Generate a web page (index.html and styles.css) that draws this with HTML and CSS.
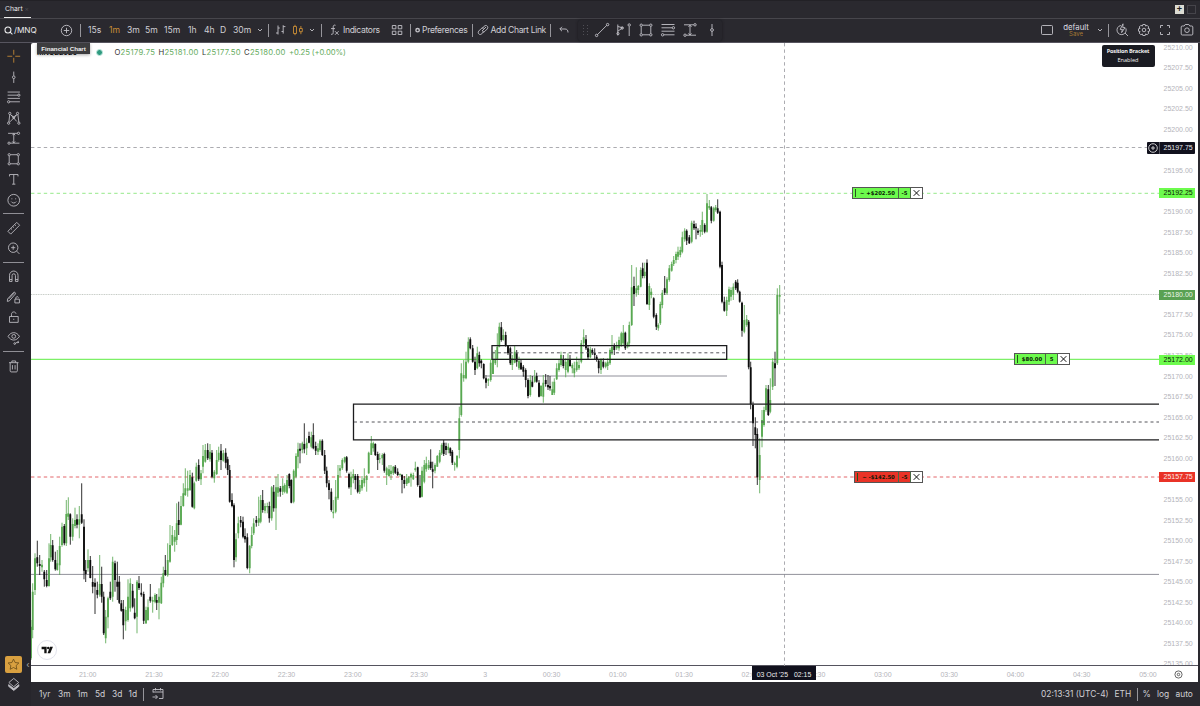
FILE: index.html
```
<!DOCTYPE html>
<html lang="en">
<head>
  <meta charset="UTF-8" />
  <meta name="viewport" content="width=device-width, initial-scale=1.0"/>
  <title>/MNQ Chart</title>
  <link rel="stylesheet" href="styles.css">
</head>
<body>

  <!-- Shared icons -->
  <svg class="defs">
    <symbol id="i-rect" viewBox="0 0 16 16"><path d="M3.2 4.5v7M12.8 4.5v7M4.5 3.2h7M4.5 12.8h7"/><circle cx="3.2" cy="3.2" r="1.2"/><circle cx="12.8" cy="3.2" r="1.2"/><circle cx="3.2" cy="12.8" r="1.2"/><circle cx="12.8" cy="12.8" r="1.2"/></symbol>
    <symbol id="i-fib" viewBox="0 0 16 16"><path d="M1.5 2.5h13M1.5 5.8h10.8M1.5 9.2h13M3.8 12.8h10.7"/><circle cx="13.4" cy="5.8" r="1.2"/><circle cx="2.6" cy="12.8" r="1.2"/></symbol>
    <symbol id="i-range" viewBox="0 0 16 16"><path d="M2 2.8h9.8M4.2 13.2H14M8 3.2v9.8M6.5 4.8L8 3.2l1.5 1.6M6.5 11.4L8 13l1.5-1.6"/><circle cx="13" cy="2.8" r="1.2"/><circle cx="3" cy="13.2" r="1.2"/></symbol>
    <symbol id="i-vline" viewBox="0 0 16 16"><path d="M8 2v4.5M8 9.5V14"/><circle cx="8" cy="8" r="1.4"/></symbol>
    <symbol id="i-down" viewBox="0 0 8 8"><path d="M2 3l2 2 2-2"/></symbol>
  </svg>

  <div class="tabs">
    <div class="tab">Chart <span class="tab-close">×</span></div>
    <div class="win-btns"><span class="win-add">+</span><span class="win-box"></span></div>
  </div>

  <div class="toolbar">
    <div class="symbol">
      <svg class="i9" viewBox="0 0 10 10"><circle cx="4.4" cy="4.4" r="3.3"/><path d="M6.8 6.8l2.6 2.6"/></svg>/MNQ
    </div>
    <svg class="i13" viewBox="0 0 13 13"><circle cx="6.5" cy="6.5" r="5.2"/><path d="M6.5 3.8v5.4M3.8 6.5h5.4"/></svg>
    <i class="bar"></i>
    <span>15s</span><span class="on">1m</span><span>3m</span><span>5m</span><span>15m</span><span>1h</span><span>4h</span><span>D</span><span>30m</span>
    <svg class="i8"><use href="#i-down"/></svg>
    <i class="bar"></i>
    <svg class="i12" viewBox="0 0 12 12"><path d="M3 1.5v9M1 9h2M3 4h1.8M8.2 1.2v8.4M6.5 7.5h1.7M8.2 2.6h2.2"/></svg>
    <svg class="i12 on" viewBox="0 0 12 12"><path d="M1.5 2.5h3v7h-3zM3 .8v1.7M3 9.5v1.7M7.5 4.5h2.8v3.2H7.5zM8.9 2v2.5M8.9 7.7v2.5"/></svg>
    <svg class="i8"><use href="#i-down"/></svg>
    <i class="bar"></i>
    <svg class="i12" viewBox="0 0 12 12"><path d="M6.5 1.3C4.8.6 4.2 1.8 4.2 3v5.5c0 1.5-.8 2.2-2.2 1.7M2 4.6h4M6 7.2l3.6 3.6M9.6 7.2L6 10.8"/></svg>
    <span class="word">Indicators</span>
    <svg class="i12" viewBox="0 0 12 12"><path d="M1.3 1.5h3.6v3.3H1.3zM7.2 1.5h3.6v3.3H7.2zM1.3 7.2h3.6v3.3H1.3zM7.2 7.2h3.6v3.3H7.2z"/></svg>
    <i class="bar"></i>
    <svg class="i8" viewBox="0 0 8 8"><circle cx="3.6" cy="4.2" r="1.7" stroke-width="1.4"/></svg>
    <span class="word">Preferences</span>
    <i class="bar"></i>
    <svg class="i12" viewBox="0 0 12 12"><path d="M5 7L9 3M4.8 4.8l2.4-2.6c2-2 4.8.5 3 2.8L7.8 7.4c-.8.8-1.8.9-2.6.4M7.2 7.2L4.8 9.8c-2 2-4.8-.5-3-2.8l2.4-2.4c.8-.8 1.8-.9 2.6-.4"/></svg>
    <span class="word">Add Chart Link</span>
    <i class="bar"></i>
    <svg class="i12" viewBox="0 0 12 12"><path d="M4 2.8L1.8 5 4 7.2M2 5h5c2 0 3 1.2 3 3.5"/></svg>
    <div class="favorites">
      <svg class="i16 dots" viewBox="0 0 16 16"><path d="M5.5 3v1M5.5 6v1M5.5 9v1M5.5 12v1M9.5 3v1M9.5 6v1M9.5 9v1M9.5 12v1"/></svg>
      <svg class="i16" viewBox="0 0 16 16"><path d="M3.3 12.8l9.6-9.6"/><circle cx="2.6" cy="13.4" r="1.2"/><circle cx="13.6" cy="2.6" r="1.2"/></svg>
      <svg class="i16" viewBox="0 0 16 16"><path d="M1.8 2.5v11M1.8 4.5l5 1.3-5 3.4M13.2 4.5v9.5"/><circle cx="2" cy="11.6" r="1.1"/><circle cx="6.2" cy="6" r="1.2"/><circle cx="13.2" cy="3" r="1.2"/></svg>
      <svg class="i16"><use href="#i-rect"/></svg>
      <svg class="i16"><use href="#i-fib"/></svg>
      <svg class="i16"><use href="#i-range"/></svg>
      <svg class="i16"><use href="#i-vline"/></svg>
    </div>
    <svg class="i14" viewBox="0 0 14 14"><rect x="1.5" y="2.5" width="11" height="9" rx="1"/></svg>
    <div class="layout-name">default<small>Save</small></div>
    <svg class="i8"><use href="#i-down"/></svg>
    <i class="bar"></i>
    <svg class="i14" viewBox="0 0 14 14"><path d="M10.8 5.2A4.6 4.6 0 1 1 5.8 2.5M10 10l3 3M8 .8L5.2 6.4h2.2L6.6 9.6 10 4.6H7.8z"/></svg>
    <svg class="i14" viewBox="0 0 14 14"><circle cx="7" cy="7" r="1.8"/><path d="M5.8 1.5h2.4l.4 1.6 1.5-.8 1.7 1.7-.9 1.4 1.6.4v2.4l-1.6.4.9 1.5-1.7 1.7-1.5-.9-.4 1.6H5.8l-.4-1.6-1.5.9-1.7-1.7.9-1.5-1.6-.4V5.8l1.6-.4-.9-1.4 1.7-1.7 1.5.8z"/></svg>
    <svg class="i14" viewBox="0 0 14 14"><path d="M2.5 5V2.5H5M9 2.5h2.5V5M11.5 9v2.5H9M5 11.5H2.5V9"/></svg>
    <svg class="i14" viewBox="0 0 14 14"><path d="M1.2 4c0-.6.4-1 1-1h2l1-1.5h3.6l1 1.5h2c.6 0 1 .4 1 1v7c0 .6-.4 1-1 1H2.2c-.6 0-1-.4-1-1z"/><circle cx="7" cy="7.2" r="2.3"/></svg>
  </div>

  <div class="main">
    <div class="sidebar">
      <svg class="on" viewBox="0 0 16 16"><path d="M8 1.2v5.2M8 9.6v5.2M1.2 8h5.2M9.6 8h5.2"/></svg>
      <svg><use href="#i-vline"/></svg>
      <svg><use href="#i-fib"/></svg>
      <svg viewBox="0 0 16 16"><path d="M2.8 12.2L3.8 4M4.6 4l6.6 7.4M11.4 4.2L4 11.8M12.4 4.2l1 7.8M5 4.6l3 2 3-2.4"/><circle cx="3.8" cy="2.9" r="1.2"/><circle cx="12" cy="2.9" r="1.2"/><circle cx="2.6" cy="13.2" r="1.2"/><circle cx="13.4" cy="13.2" r="1.2"/><circle cx="8" cy="7.4" r="1"/></svg>
      <svg><use href="#i-range"/></svg>
      <svg><use href="#i-rect"/></svg>
      <svg viewBox="0 0 16 16"><path d="M3.5 5V3h9v2M8 3v10.2M6.3 13.2h3.4"/></svg>
      <svg viewBox="0 0 16 16"><circle cx="8" cy="8" r="6.2"/><path d="M6 6v1M10 6v1M5.4 9.4c1 2 4.2 2 5.2 0"/></svg>
      <i class="sep"></i>
      <svg viewBox="0 0 16 16"><path d="M1.8 11.2l9.4-9.4 3 3-9.4 9.4zM5 8.2l1.2 1.2M7 6.2l1.2 1.2M9 4.2l1.2 1.2"/></svg>
      <svg viewBox="0 0 16 16"><circle cx="7.4" cy="7.4" r="5"/><path d="M11 11l3 3M7.4 5.2v4.4M5.2 7.4h4.4"/></svg>
      <i class="sep"></i>
      <svg viewBox="0 0 16 16"><path d="M3.5 13.5V7a4.5 4.5 0 0 1 9 0v6.5H9.8V7.2a1.8 1.8 0 0 0-3.6 0v6.3zM3.5 11.5h2.7M9.8 11.5h2.7"/></svg>
      <svg viewBox="0 0 16 16"><path d="M1.5 9.8l6.4-7c.8-.8 2.6.8 1.8 1.8L3.4 11.8l-2.2.6zM2.8 9.6l6-6.4M9.2 10h4.8v4H9.2zM10.2 10V8.6c.2-1.6 2.6-1.6 2.8-.2"/></svg>
      <svg viewBox="0 0 16 16"><path d="M3.5 7.2h9.2v6.2H3.5zM5.6 7.2V4.8c0-3 4.2-3.2 4.8-.6M8 9.6v1.2"/></svg>
      <svg viewBox="0 0 16 16"><path d="M2 6c3-5.2 9-5.2 12 0-3 5.2-9 5.2-12 0zM9.8 13.4l3.6-2.4M13.6 12.4l-2 .4"/><circle cx="8" cy="6" r="2"/><circle cx="9" cy="13.6" r=".9"/></svg>
      <i class="sep"></i>
      <svg viewBox="0 0 16 16"><path d="M3 4.2h10M4.2 4.2v8.6c0 .7.4 1.2 1 1.2h5.6c.6 0 1-.5 1-1.2V4.2M6 4V2.4h4V4M6.6 6.8v4.6M9.4 6.8v4.6"/></svg>
      <div class="star"><svg viewBox="0 0 16 16"><path d="M8 1.4l2 4.2 4.6.5-3.4 3.2.9 4.6L8 11.7l-4.1 2.2.9-4.6L1.4 6.1 6 5.6z"/></svg></div>
      <svg viewBox="0 0 16 16"><path class="fill" d="M2.6 8.4L8 12.6l5.4-4.2v1.8L8 14.6l-5.4-4.4z"/><path d="M8 1.8l5.2 4.4L8 10.6 2.8 6.2z"/></svg>
      <span class="collapse">‹</span>
    </div>

    <div class="content">
      <div class="chart">
        <div class="pane">
          <svg id="plot" viewBox="31 43 1128 623">
            <g class="levels">
              <path class="cross" d="M31 147.5H1159M784.5 43V666"/>
              <path class="target" d="M31 193.3H1159"/>
              <path class="last" d="M31 294.5H1159"/>
              <path class="stop" d="M31 477H1159"/>
              <path class="level" d="M31 574.4H1159M487 376H727"/>
              <path class="entry" d="M31 359.4H1159"/>
            </g>
            <g id="candles"></g>
            <path class="box" d="M1159 404.2H353.5V439.8H1159M492 345.7H726.7V359.4H492z"/>
            <path class="mid" d="M354 422H1159M492 352.8H727"/>
          </svg>

          <div class="legend">
            <span class="ticker">MNQZ2025</span><span class="live"></span>
            <span>O<b>25179.75</b></span><span>H<b>25181.00</b></span><span>L<b>25177.50</b></span><span>C<b>25180.00</b></span><b class="change">+0.25 (+0.00%)</b>
          </div>

          <div class="order tp"><span class="pnl">~ +$202.50</span><span class="qty">-5</span><svg viewBox="0 0 12 12"><path d="M2.6 2.6l6.8 6.8M9.4 2.6L2.6 9.4"/></svg></div>
          <div class="order pos"><span class="pnl">$80.00</span><span class="qty">5</span><svg viewBox="0 0 12 12"><path d="M2.6 2.6l6.8 6.8M9.4 2.6L2.6 9.4"/></svg></div>
          <div class="order sl"><span class="pnl">~ -$142.50</span><span class="qty">-5</span><svg viewBox="0 0 12 12"><path d="M2.6 2.6l6.8 6.8M9.4 2.6L2.6 9.4"/></svg></div>

          <div class="tv">
            <svg viewBox="0 0 20 20"><path d="M4 6.5h5.6v7H7V9.2H4zM13.4 6.5h3.2l-3 7h-3z"/><circle cx="11.4" cy="7.9" r="1.4"/></svg>
          </div>
        </div>

        <div class="prices">
          <div class="ticks" id="prices"></div>
          <div class="tag tag-cross"><svg viewBox="0 0 12 12"><circle cx="6" cy="6" r="4.3"/><path d="M6 4v4M4 6h4"/></svg><span>25197.75</span></div>
          <div class="tag tag-tp">25192.25</div>
          <div class="tag tag-last">25180.00</div>
          <div class="tag tag-entry">25172.00</div>
          <div class="tag tag-sl">25157.75</div>
        </div>

        <div class="times">
          <div class="ticks" id="times"></div>
          <div class="time-tag"><span>03 Oct '25</span><span>02:15</span></div>
        </div>
        <div class="corner"><svg viewBox="0 0 10 10"><circle cx="5" cy="5" r="4"/><circle cx="5" cy="5" r="1.4"/></svg></div>

        <div class="tip tip-chart">Financial Chart</div>
        <div class="tip tip-bracket"><b>Position Bracket</b>Enabled</div>
      </div>

      <div class="bottom">
        <span>1yr</span><span>3m</span><span>1m</span><span>5d</span><span>3d</span><span>1d</span>
        <i class="bar"></i>
        <svg class="i14" viewBox="0 0 14 14"><path d="M2 5.5v-3h10v9H8M2 5h10M4.5 1v2.5M9.5 1v2.5M1.5 10h4.8M4.5 8l2 2-2 2"/></svg>
        <span class="clock">02:13:31 (UTC-4)</span><span>ETH</span>
        <i class="bar"></i>
        <span>%</span><span>log</span><span>auto</span>
      </div>
    </div>
  </div>

  <script src="chart.js"></script>
</body>
</html>
```
FILE: styles.css
```
* {
  box-sizing: border-box;
}

body {
  margin: 0;
  width: 1200px;
  height: 706px;
  overflow: hidden;
  background: #2a292f;
  color: #d0cfd4;
  font: 8.6px/12px Inter, "Liberation Sans", sans-serif;
}

svg {
  display: block;
  fill: none;
  stroke: #c3c2c8;
  stroke-width: 0.9;
  overflow: visible;
}

.defs {
  position: absolute;
  width: 0;
  height: 0;
}

.on {
  color: #c98d35;
  stroke: #c98d35;
}

span.on {
  stroke: none;
}

.i8 { width: 8px; height: 8px; }
.i9 { width: 9px; height: 9px; }
.i12 { width: 12px; height: 12px; }
.i13 { width: 13px; height: 13px; }
.i14 { width: 14px; height: 14px; }
.i16 { width: 16px; height: 16px; }

.bar {
  width: 1px;
  height: 13px;
  background: #96959b;
}

/* top tab strip */
.tabs {
  display: flex;
  justify-content: space-between;
  height: 19px;
  padding: 0 4px;
  border-top: 1px solid #222126;
  border-bottom: 1px solid #47464c;
}

.tab {
  width: 27px;
  height: 17px;
  padding: 2px 0 0 1px;
  border-bottom: 1.5px solid #f0f0f0;
  color: #e6e6e8;
  font-size: 6.8px;
  white-space: nowrap;
}

.tab-close {
  color: #4c4b52;
}

.win-btns {
  display: flex;
  gap: 3px;
  padding: 4px 0 0;
}

.win-add,
.win-box {
  width: 9px;
  height: 9px;
}

.win-add {
  background: #dcdcd4;
  color: #222;
  font: bold 9px/9px "Liberation Sans", sans-serif;
  text-align: center;
}

.win-box {
  border: 1px solid #45444a;
}

/* toolbar */
.toolbar {
  display: grid;
  grid-template-columns:
    56px 20px 8px
    21px 18px 18px 19px 24px 16px 16px 13px 22.5px 12.5px 7px
    17px 16px 13px 8px
    14px 48px 19px
    4px 8px 50px
    4.5px 14px 59.5px
    8px 20px 462px
    23px 33px 12px 6.5px
    22px 21.5px 22px 14px;
  align-items: center;
  height: 24px;
  padding: 0 0 1px 4px;
  border-bottom: 1px solid #57555f;
  white-space: nowrap;
}

.word {
  letter-spacing: -0.35px;
}

.symbol {
  display: flex;
  align-items: center;
  gap: 1px;
  color: #ececee;
  font-size: 8.2px;
}

.symbol svg {
  stroke: #ececee;
  stroke-width: 1.2;
}

.favorites {
  display: flex;
  align-items: center;
  gap: 6px;
  width: 144px;
  height: 21px;
  background: #27262c;
  border-radius: 3px;
  box-shadow: 0 0 3px #1a191d;
}

.favorites .dots {
  margin-right: -6px;
  stroke: #55545b;
}

.layout-name {
  width: 26px;
  color: #dddce0;
  text-align: center;
  font-size: 7.8px;
  line-height: 8px;
}

.layout-name small {
  display: block;
  color: #a87a33;
  font-size: 6px;
  line-height: 6px;
}

/* main area */
.main {
  display: flex;
  height: 663px;
}

.sidebar {
  position: relative;
  display: flex;
  flex-direction: column;
  width: 31px;
  padding: 3px 0 11.5px 4px;
  background: #27262c;
}

.sidebar > svg {
  flex: none;
  width: 19.5px;
  height: 20.5px;
  padding: 2.5px 2.2px;
}

.sep {
  height: 7.5px;
  width: 21px;
  margin-left: -1px;
  background: linear-gradient(#8f8e95, #8f8e95) center / 100% 1px no-repeat;
}

.star {
  width: 17px;
  height: 17px;
  margin: auto 0 1.5px 1px;
  padding: 2px;
  border-radius: 2px;
  background: #d9a040;
}

.star svg {
  stroke: #5d4315;
}

.fill {
  fill: #c3c2c8;
}

.collapse {
  position: absolute;
  right: 1.5px;
  top: 616px;
  color: #aaa;
}

.content {
  flex: 1;
}

.chart {
  position: relative;
  display: grid;
  grid-template: 623px 16px / 1128px 38.5px;
  width: 1166.5px;
  background: #fff;
  border-radius: 2px 0 0 0;
}

.pane,
.prices {
  position: relative;
  border-bottom: 1px solid #55545e;
}

#plot {
  width: 1128px;
  height: 623px;
  overflow: hidden;
}

/* drawn lines */
.cross {
  stroke: #a3a3a8;
  stroke-width: 0.9;
  stroke-dasharray: 3.4 3;
}

.target {
  stroke: #97e98a;
  stroke-width: 1;
  stroke-dasharray: 3.4 3;
}

.stop {
  stroke: #e0565a;
  stroke-width: 0.9;
  stroke-dasharray: 3.4 3;
}

.last {
  stroke: #b5bdb5;
  stroke-width: 0.8;
  stroke-dasharray: 1 0.7;
}

.level {
  stroke: #85848f;
}

.entry {
  stroke: #7df067;
  stroke-width: 1.2;
}

.box {
  stroke: #1c1c1e;
  stroke-width: 1.3;
}

.mid {
  stroke: #55555a;
  stroke-width: 1;
  stroke-dasharray: 3 2.9;
}

.up {
  stroke: #58a851;
}

.down {
  stroke: #0c0c0c;
}

.wick {
  stroke-width: 0.85;
}

.body {
  stroke-width: 1.85;
}

.legend {
  position: absolute;
  left: 6px;
  top: 3.5px;
  display: flex;
  color: #333;
  font-size: 7.7px;
  letter-spacing: 0.28px;
  gap: 3.2px;
  white-space: nowrap;
}

.legend b {
  color: #66ac60;
  font-weight: normal;
}

.legend .change {
  letter-spacing: -0.1px;
}

.ticker {
  width: 56px;
  color: #111;
  font-size: 7px;
  font-weight: bold;
  letter-spacing: 0;
}

.live {
  width: 7px;
  height: 7px;
  margin: 2px 8px 0 0;
  border: 1.5px solid #c4ebe0;
  border-radius: 50%;
  background: #2f9a80;
}

/* order labels */
.order {
  position: absolute;
  display: flex;
  height: 12px;
  border: 1px solid #555;
  color: #0a1a06;
  font: bold 5.3px/10px "DejaVu Sans", sans-serif;
  text-align: center;
}

.order span {
  border-right: 1px solid #4a6a44;
}

.order .pnl {
  flex: 1;
  padding-left: 4px;
  background: linear-gradient(#26531c, #26531c) 2px center / 1px 8px no-repeat;
}

.order .qty {
  width: 12px;
}

.order svg {
  width: 11px;
  height: 10px;
  background: #fff;
  stroke: #111;
  stroke-width: 1.2;
}

.tp,
.pos {
  background: #6dfb4d;
}

.tp { left: 821px; top: 144px; width: 71px; }
.pos { left: 983px; top: 310px; width: 56px; }
.sl { left: 823px; top: 428px; width: 69px; background: #ea3327; }

.tv {
  position: absolute;
  left: 6px;
  top: 597px;
  width: 20px;
  height: 20px;
  border: 1px solid #e2e3ec;
  border-radius: 50%;
  background: #fff;
}

.tv svg {
  fill: #111;
  stroke: none;
}

/* axes */
.prices,
.times {
  color: #b4b4ba;
  font: 7px/10px "Liberation Sans", sans-serif;
}

.prices .ticks {
  height: 622px;
  padding-left: 4.5px;
  overflow: hidden;
}

.prices .ticks div {
  height: 20.57px;
  line-height: 20.57px;
  position: relative;
  top: -5.4px;
}

.tag {
  position: absolute;
  left: 0;
  width: 36px;
  height: 10px;
  padding-left: 4.5px;
  color: #0b2106;
}

.tag-cross {
  left: -12.5px;
  top: 98.5px;
  display: flex;
  width: 48.5px;
  height: 12px;
  padding: 0;
  border-radius: 1px;
  background: #11111d;
  color: #e8e8ee;
  line-height: 12px;
}

.tag-cross svg {
  width: 12px;
  height: 12px;
  stroke: #ddd;
}

.tag-cross span {
  padding-left: 4px;
  border-left: 1px solid #55555f;
}

.tag-tp { top: 145px; background: #6dfb4d; }
.tag-last { top: 246.5px; background: #59a152; color: #e9f5e7; }
.tag-entry { top: 311.5px; background: #6dfb4d; }
.tag-sl { top: 429px; background: #e93327; color: #ffe9e6; }

.times {
  position: relative;
  overflow: hidden;
}

.times .ticks {
  display: flex;
  padding: 4px 0 0 23.6px;
}

.times .ticks div {
  flex: none;
  width: 66.28px;
  text-align: center;
}

.time-tag {
  position: absolute;
  left: 721px;
  top: 0;
  width: 64px;
  height: 14px;
  display: flex;
  justify-content: center;
  gap: 6px;
  background: #11111d;
  color: #eee;
  font-size: 6.9px;
  line-height: 17px;
  white-space: nowrap;
}

.corner {
  display: flex;
  justify-content: center;
  align-items: center;
}

.corner svg {
  width: 9px;
  height: 9px;
  stroke: #444;
}

/* tooltips */
.tip {
  position: absolute;
  color: #f0f0f0;
  text-align: center;
  white-space: nowrap;
}

.tip-chart {
  left: 6px;
  top: 0;
  width: 53px;
  height: 11px;
  background: #3d3d3f;
  box-shadow: 0 1px 3px #0005;
  font: bold 6.2px/11px "Liberation Sans", sans-serif;
}

.tip-bracket {
  left: 1070.5px;
  top: 1.5px;
  width: 53px;
  height: 22px;
  padding-top: 2.5px;
  border-radius: 2px;
  background: #1a1b22;
  font: 5.6px/8.5px "Open Sans", sans-serif;
}

.tip-bracket b {
  display: block;
  letter-spacing: -0.22px;
}

/* bottom bar */
.bottom {
  display: grid;
  grid-template-columns: 19px 19px 18px 17px 16.5px 14.5px 8px 890px 73.5px 22px 6px 14.5px 18.5px 20px;
  align-items: center;
  height: 24px;
  padding-left: 8px;
  font-size: 8.4px;
  white-space: nowrap;
}
```
FILE: chart.js
```
// Bars are "x high open close low", 3 units per pixel, relative to each chunk's origin.
// y grows downwards, so open > close is an up bar.
const chunks = [
  { x: 30, y: 420, bars: `
    3 600 715 620 720,8 490 630 515 655,15 400 510 415 525,22 362 412 430 440,29 405 432 438 465,36 420 442 434 455,
    43 450 455 478 500,50 450 480 498 502,57 370 498 415 500,62 342 412 375 425,68 360 376 420 425,76 395 420 448 452,
    82 390 450 430 452,89 350 436 378 465,96 308 375 320 380,103 312 318 370 376,109 240 370 282 378,115 232 290 280 300,
    121 280 283 350 374,128 295 350 312 362,135 263 318 300 325,141 283 298 314 325,148 258 314 298 355,155 190 283 308 312,
    162 298 320 452 478,167 420 450 462 486,174 388 445 420 455,181 408 420 474 475,188 438 486 500 520,195 475 488 500 582,
    202 485 510 524 535,209 405 524 492 530,215 440 492 530 548,221 515 530 640 645,227 570 655 590 670,234 530 592 535 625,
    241 485 515 535 540,248 410 530 425 545,255 422 430 480 515,262 425 485 500 540,268 468 485 548 552,274 540 550 572 575,
    280 540 567 616 658,287 560 604 570 632,294 478 600 530 605,301 475 565 490 575,308 492 512 560 565,314 535 578 595 598,
    321 480 590 485 640,327 468 490 504 510,334 490 518 524 530,341 515 522 602 612,348 560 610 570 612,354 538 600 562 602,
    361 492 530 542 548,368 530 545 540 578,375 520 545 525 550,380 522 540 548 570,387 505 548 530 598,394 470 550 488 552,
    400 440 490 460 502,406 405 450 464 468,413 370 466 420 470,420 315 425 375 428,427 318 375 345 378,434 330 365 350 395,
    440 250 360 310 375,446 245 300 315 345,453 228 314 258 316,460 190 258 220 260,466 145 225 205 228,473 152 212 205 230,
    480 150 210 165 213,487 158 172 260 263,493 185 265 190 268,499 128 182 140 185,506 118 135 178 183,513 150 178 160 195,
    519 75 140 108 160,526 72 125 90 128,533 70 90 115 120,540 72 118 95 125,546 90 98 170 175,553 150 175 155 188,
    560 90 162 120 165,566 80 120 98 125,573 72 92 120 150,580 90 122 100 125,587 85 98 128 145,593 110 118 150 165,
    599 135 150 245 248,606 220 240 258 262,612 250 256 420 442,618 340 412 358 425,625 290 340 310 355,632 288 300 308 322,
    639 290 305 350 355,645 325 348 358 368,652 340 352 444 448,659 375 445 378 460,665 320 378 345 385,671 295 340 310 345,
    679 288 300 308 320,686 230 308 295 318` },
  { x: 230, y: 400, bars: `
    92 285 365 300 370,98 270 300 330 338,105 310 332 318 340,112 308 322 318 340,118 305 318 355 368,125 258 355 262 362,
    131 255 275 325 335,138 230 325 262 390,144 222 278 262 290,151 258 265 275 290,158 235 275 258 285,164 250 275 255 280,
    171 225 278 240 282,178 220 222 258 265,184 238 240 308 310,191 208 305 212 310,198 160 230 168 235,204 128 170 148 205,
    210 130 146 152 190,217 125 150 130 160,223 70 132 148 160,230 115 145 128 165,237 95 108 128 130,244 95 140 112 145,
    250 70 105 145 148,257 125 138 152 165,264 130 155 145 165,270 118 150 122 155,277 118 122 165 168,284 150 165 212 222,
    290 200 212 250 262,297 240 250 270 298,304 265 275 330 335,310 300 340 335 355,317 240 335 290 340,324 195 295 225 300,
    330 195 212 205 230,337 175 205 180 210,344 170 185 172 190,350 168 172 212 218,357 218 222 262 266,363 215 262 230 285,
    370 208 235 222 250,376 222 228 240 268,383 222 228 275 280,389 240 275 255 282,396 228 265 240 272,403 205 250 235 260,
    410 225 240 228 275,416 155 220 158 222,424 108 165 130 165,430 125 145 130 155,436 130 132 165 168,443 155 162 180 210,
    449 160 178 175 190,457 160 175 165 195,463 158 162 212 218,470 200 225 205 255,477 195 228 208 230,483 195 222 212 240,
    490 198 220 200 225,496 195 200 218 222,503 205 215 225 228,510 220 225 222 230,516 222 225 240 280,523 228 240 252 265,
    530 222 252 235 258,536 228 248 230 250,543 218 232 222 260,550 218 238 225 240,556 185 210 205 215,563 200 202 255 260,
    570 225 258 292 294,576 200 290 212 292,583 180 245 195 250,589 170 208 190 215,596 180 205 195 210,602 148 185 205 210,
    608 185 208 215 265,615 190 212 195 220,622 165 200 168 200,629 150 185 158 190,635 130 160 135 165,641 120 128 162 168,
    648 128 138 150 165,655 130 150 140 160,661 142 145 160 168,667 150 155 188 195,674 185 195 190 212,681 165 200 168 205,
    688 20 150 55 175` },
  { x: 440, y: 300, bars: `
    64 190 345 220 350,71 180 235 225 245,78 155 235 185 238,85 112 185 125 190,91 112 118 145 148,98 135 145 185 188,
    105 170 185 210 225,112 140 205 160 208,118 155 165 190 200,124 178 182 190 205,131 190 192 235 238,138 225 235 248 265,
    145 235 242 238 258,152 180 240 188 245,159 155 222 180 222,166 150 190 180 195,172 100 180 140 202,178 68 140 80 142,
    184 66 82 120 125,190 88 120 105 122,197 95 105 138 140,204 135 138 160 165,211 140 145 190 195,217 165 195 175 210,
    224 138 188 155 190,230 150 160 185 200,237 170 205 182 210,243 178 188 208 210,250 195 200 215 230,257 205 210 240 262,
    264 235 240 288 295,271 225 285 240 290,277 228 245 260 262,284 210 245 230 248,290 218 228 245 248,297 240 248 290 292,
    303 255 288 258 290,310 225 290 248 308,317 222 240 252 260,324 225 255 262 270,330 228 258 265 272,337 245 285 268 285,
    343 235 278 245 285,350 190 238 205 240,357 180 210 190 215,363 155 195 165 200,370 165 178 198 205,377 175 210 185 232,
    384 160 215 180 220,390 165 180 198 200,397 190 205 195 220,403 185 220 205 232,410 170 210 185 215,417 180 205 195 210,
    424 120 185 130 190,431 88 130 112 140,438 105 118 145 150,444 135 145 172 178,451 140 172 148 175,457 145 150 160 165,
    464 145 158 165 180,470 165 170 180 185,476 178 182 205 220,483 175 210 180 222,490 175 185 200 205,497 185 200 190 205,
    503 175 198 185 210,510 145 190 150 195,516 105 160 140 165,523 130 138 150 165,530 125 145 135 150,537 110 145 120 152,
    544 95 135 100 140,550 75 130 98 135,556 95 98 145 150,563 125 140 130 145` },
  { x: 600, y: 180, bars: `
    88 425 490 435 500,95 255 435 322 438,102 290 318 342 378,109 262 340 325 350,115 315 330 318 345,122 262 320 270 322,
    128 248 265 288 295,134 248 288 275 295,141 238 248 372 375,148 310 375 318 390,154 325 345 335 355,161 352 355 410 415,
    169 400 405 440 450,175 430 445 435 452,181 365 430 372 435,187 330 375 338 385,194 288 325 338 345,201 292 340 298 345,
    208 255 300 265 305,215 245 272 252 275,221 228 252 240 258,228 215 240 222 250,234 200 230 215 240,241 200 225 210 232,
    247 155 215 172 220,254 145 178 152 185,260 148 152 182 195,268 165 172 190 192,275 122 185 128 190,282 122 132 145 150,
    288 130 140 145 178,294 145 152 158 165,301 135 155 150 170,307 95 155 120 165,314 130 135 155 160,321 42 155 70 158,
    328 60 85 78 90,334 78 82 122 130,341 80 122 85 125,347 75 90 82 95,353 58 85 98 102,360 92 95 260 265,
    366 245 255 365 370,373 350 365 392 395,380 350 392 360 408,387 320 365 328 375,393 322 350 330 362,400 310 345 320 360,
    407 300 305 325 330,413 298 308 335 340,419 332 335 365 368,426 365 368 452 470,433 375 455 420 460,440 405 435 418 440,
    446 420 425 562 568,452 545 562 672 688,459 665 675 730 798,466 712 742 765 805,472 745 762 892 915,479 775 900 825 940,
    486 690 770 720 802,492 680 735 690 740,498 615 690 625 695,505 615 628 705 708,511 595 695 660 700,518 535 620 545 630,
    525 515 550 565 618,532 325 550 345 555,539 315 350 345 403` }
];

const paths = { 'up wick': '', 'up body': '', 'down wick': '', 'down body': '' };

chunks.forEach(chunk => {
  chunk.bars.trim().split(',').forEach(bar => {
    const [x, high, open, close, low] = bar.trim().split(/\s+/).map(Number);
    const dir = open > close ? 'up' : 'down';
    const px = chunk.x + x / 3;
    const py = v => (chunk.y + v / 3).toFixed(1);
    paths[dir + ' wick'] += `M${px.toFixed(1)} ${py(high)}V${py(low)}`;
    paths[dir + ' body'] += `M${px.toFixed(1)} ${py(open)}V${py(close)}`;
  });
});

document.getElementById('candles').innerHTML = Object.keys(paths)
  .map(name => `<path class="${name}" d="${paths[name]}"/>`).join('');

// axis labels
let prices = '';
for (let p = 25210; p >= 25135; p -= 2.5) {
  prices += `<div>${p.toFixed(2)}</div>`;
}
document.getElementById('prices').innerHTML = prices;

let times = '';
for (let i = 0; i < 17; i++) {
  const mins = (21 * 60 + i * 30) % 1440;
  const label = String(Math.floor(mins / 60)).padStart(2, '0') + ':' + String(mins % 60).padStart(2, '0');
  times += `<div>${mins === 0 ? '3' : label}</div>`;
}
document.getElementById('times').innerHTML = times;
```
